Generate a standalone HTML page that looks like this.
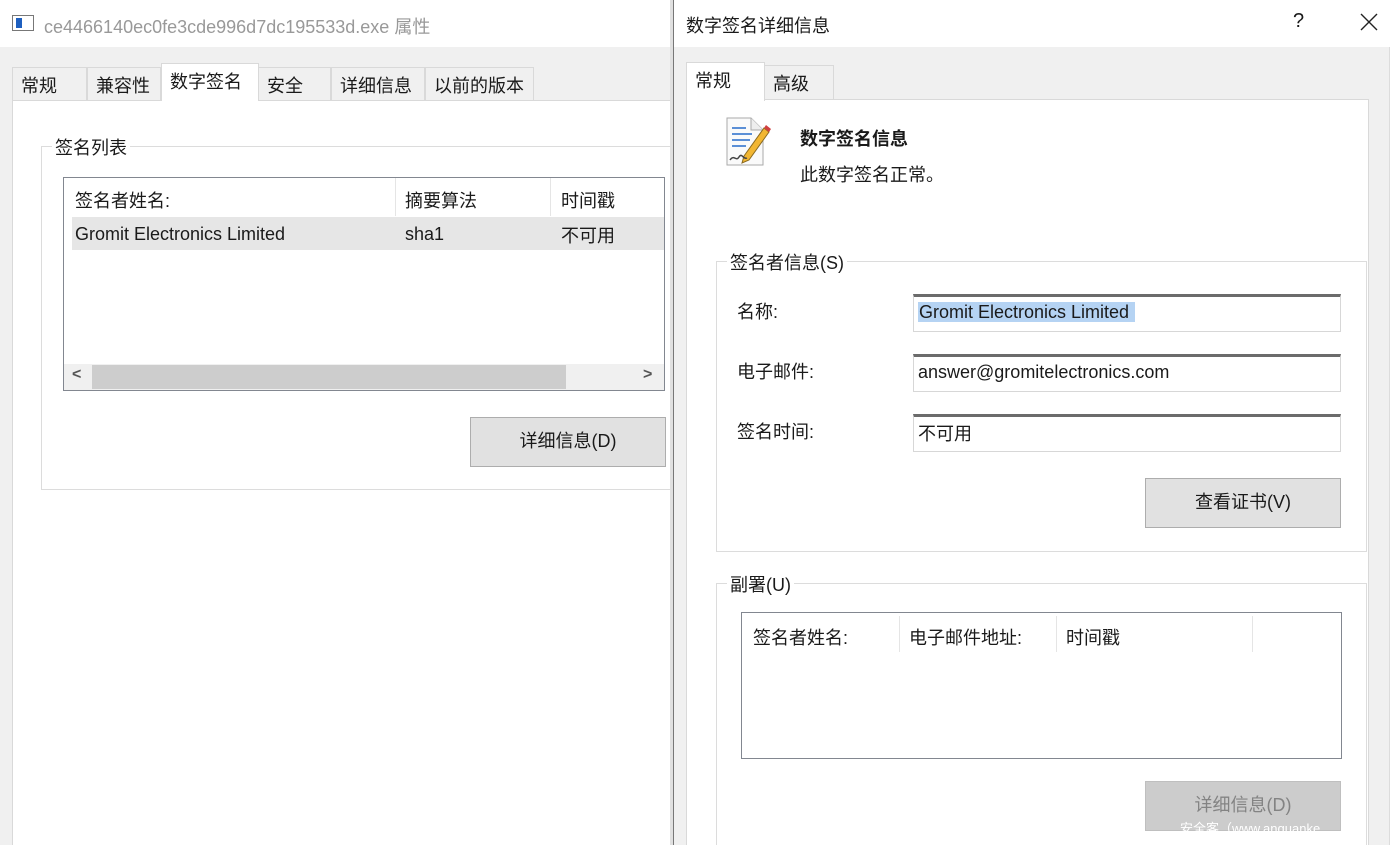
<!DOCTYPE html>
<html><head><meta charset="utf-8"><style>
*{box-sizing:border-box;margin:0;padding:0}
html,body{width:1396px;height:845px;overflow:hidden}
body{position:relative;background:#fff;font-family:"Liberation Sans","Microsoft YaHei","Noto Sans CJK SC",sans-serif;font-size:18px;color:#1a1a1a}
.a{position:absolute}
.tab{position:absolute;border:1px solid #d9d9d9;border-bottom:none;background:#f0f0f0;padding:4px 0 0 8px;font-size:18px}
.tab.s{background:#fff;z-index:2}
.grp{position:absolute;border:1px solid #dcdcdc}
.lbl{position:absolute;background:#fff;padding:0 3px;font-size:18px;top:-13px}
.btn{position:absolute;background:#e1e1e1;border:1px solid #adadad;text-align:center;font-size:18px}
.inp{position:absolute;border:1px solid #d7d7d7;border-top:3px solid #6b6b6b;background:#fff;padding:5px 4px 0;font-size:18px}
.sep{position:absolute;width:1px;background:#e5e5e5}
.l{position:relative;top:2px}
</style></head><body>
<!-- left window -->
<div class="a" style="left:0;top:0;width:673px;height:47px;background:#fff"></div>
<div class="a" style="left:12px;top:15px;width:22px;height:16px;border:1px solid #777;background:#fff"><div style="position:absolute;left:3px;top:2px;width:6px;height:10px;background:#1e5fbf"></div></div>
<div class="a" style="left:44px;top:13px;color:#999;font-size:18px">ce4466140ec0fe3cde996d7dc195533d.exe 属性</div>
<div class="a" style="left:0;top:47px;width:673px;height:798px;background:#f0f0f0"></div>
<div class="tab" style="left:12px;top:67px;width:75px;height:33px">常规</div>
<div class="tab" style="left:87px;top:67px;width:74px;height:33px">兼容性</div>
<div class="tab s" style="left:161px;top:63px;width:98px;height:38px">数字签名</div>
<div class="tab" style="left:258px;top:67px;width:73px;height:33px">安全</div>
<div class="tab" style="left:331px;top:67px;width:94px;height:33px">详细信息</div>
<div class="tab" style="left:425px;top:67px;width:109px;height:33px">以前的版本</div>
<div class="a" style="left:12px;top:100px;width:661px;height:760px;background:#fff;border:1px solid #d9d9d9;border-right:none"></div>
<div class="grp" style="left:41px;top:146px;width:640px;height:344px"><div class="lbl" style="left:10px">签名列表</div></div>
<div class="a" style="left:63px;top:177px;width:602px;height:214px;border:1px solid #828790;background:#fff">
 <div class="a" style="left:11px;top:9px">签名者姓名:</div>
 <div class="sep" style="left:331px;top:0;height:38px"></div>
 <div class="a" style="left:341px;top:9px">摘要算法</div>
 <div class="sep" style="left:486px;top:0;height:38px"></div>
 <div class="a" style="left:497px;top:9px">时间戳</div>
 <div class="a" style="left:8px;top:39px;width:592px;height:33px;background:#e6e6e6"></div>
 <div class="a" style="left:11px;top:46px">Gromit Electronics Limited</div>
 <div class="a" style="left:341px;top:46px">sha1</div>
 <div class="a" style="left:497px;top:44px">不可用</div>
 <div class="a" style="left:0;top:186px;width:600px;height:26px;background:#f0f0f0"></div>
 <div class="a" style="left:28px;top:187px;width:474px;height:24px;background:#cdcdcd"></div>
 <div class="a" style="left:8px;top:188px;font-size:16px;font-weight:bold;color:#555">&lt;</div>
 <div class="a" style="left:579px;top:188px;font-size:16px;font-weight:bold;color:#555">&gt;</div>
</div>
<div class="btn" style="left:470px;top:417px;width:196px;height:50px;line-height:47px">详细信息(D)</div>
<div class="a" style="left:670px;top:0;width:3px;height:845px;background:#e0e0e0"></div>
<div class="a" style="left:673px;top:0;width:1px;height:845px;background:#777"></div>
<!-- right window -->
<div class="a" style="left:674px;top:0;width:722px;height:47px;background:#fff"></div>
<div class="a" style="left:686px;top:12px;font-size:18px">数字签名详细信息</div>
<div class="a" style="left:1293px;top:10px;font-size:20px">?</div>
<svg class="a" style="left:1360px;top:13px" width="18" height="18"><path d="M1 1L17 17M17 1L1 17" stroke="#222" stroke-width="1.4"/></svg>
<div class="a" style="left:674px;top:47px;width:722px;height:798px;background:#f0f0f0"></div>
<div class="a" style="left:1389px;top:47px;width:1px;height:798px;background:#dcdcdc"></div>
<div class="a" style="left:1390px;top:47px;width:6px;height:798px;background:#fff"></div>
<div class="tab s" style="left:686px;top:62px;width:79px;height:39px">常规</div>
<div class="tab" style="left:764px;top:65px;width:70px;height:35px">高级</div>
<div class="a" style="left:686px;top:99px;width:683px;height:760px;background:#fff;border:1px solid #d9d9d9"></div>
<svg class="a" style="left:724px;top:116px" width="50" height="52" viewBox="0 0 50 52">
 <path d="M3 2h24l12 12v35H3z" fill="#fafafa" stroke="#aaa"/>
 <path d="M27 2v12h12" fill="#eee" stroke="#aaa"/>
 <g stroke="#5b8fd6" stroke-width="2"><line x1="8" y1="12" x2="22" y2="12"/><line x1="8" y1="18" x2="28" y2="18"/><line x1="8" y1="24" x2="26" y2="24"/><line x1="8" y1="30" x2="22" y2="30"/></g>
 <path d="M20 40L40 12l5 4-20 28-7 3z" fill="#f2b632" stroke="#8a6a20"/>
 <path d="M40 12l5 4 2-3-5-4z" fill="#d04040"/>
 <path d="M6 44c4-6 6 2 9-3s4 3 8 1" fill="none" stroke="#444" stroke-width="1.5"/>
</svg>
<div class="a" style="left:800px;top:125px;font-weight:bold">数字签名信息</div>
<div class="a" style="left:800px;top:161px">此数字签名正常。</div>
<div class="grp" style="left:716px;top:261px;width:651px;height:291px"><div class="lbl" style="left:10px">签名者信息(S)</div></div>
<div class="a" style="left:737px;top:298px">名称:</div>
<div class="inp" style="left:913px;top:294px;width:428px;height:38px"><span style="background:#b5d3f3;padding:0 6px 0 1px">Gromit Electronics Limited</span></div>
<div class="a" style="left:737px;top:358px">电子邮件:</div>
<div class="inp" style="left:913px;top:354px;width:428px;height:38px">answer@gromitelectronics.com</div>
<div class="a" style="left:737px;top:418px">签名时间:</div>
<div class="inp" style="left:913px;top:414px;width:428px;height:38px;padding-top:3px">不可用</div>
<div class="btn" style="left:1145px;top:478px;width:196px;height:50px;line-height:47px">查看证书(V)</div>
<div class="grp" style="left:716px;top:583px;width:651px;height:280px"><div class="lbl" style="left:10px">副署(U)</div></div>
<div class="a" style="left:741px;top:612px;width:601px;height:147px;border:1px solid #828790;background:#fff">
 <div class="a" style="left:11px;top:11px">签名者姓名:</div>
 <div class="sep" style="left:157px;top:3px;height:36px"></div>
 <div class="a" style="left:167px;top:11px">电子邮件地址:</div>
 <div class="sep" style="left:314px;top:3px;height:36px"></div>
 <div class="a" style="left:324px;top:11px">时间戳</div>
 <div class="sep" style="left:510px;top:3px;height:36px"></div>
</div>
<div class="btn" style="left:1145px;top:781px;width:196px;height:50px;line-height:47px;background:#cccccc;border-color:#bfbfbf;color:#838383">详细信息(D)</div>
<div class="a" style="left:1180px;top:818px;font-size:13px;color:#fff">安全客（www.anquanke.</div>
</body></html>
